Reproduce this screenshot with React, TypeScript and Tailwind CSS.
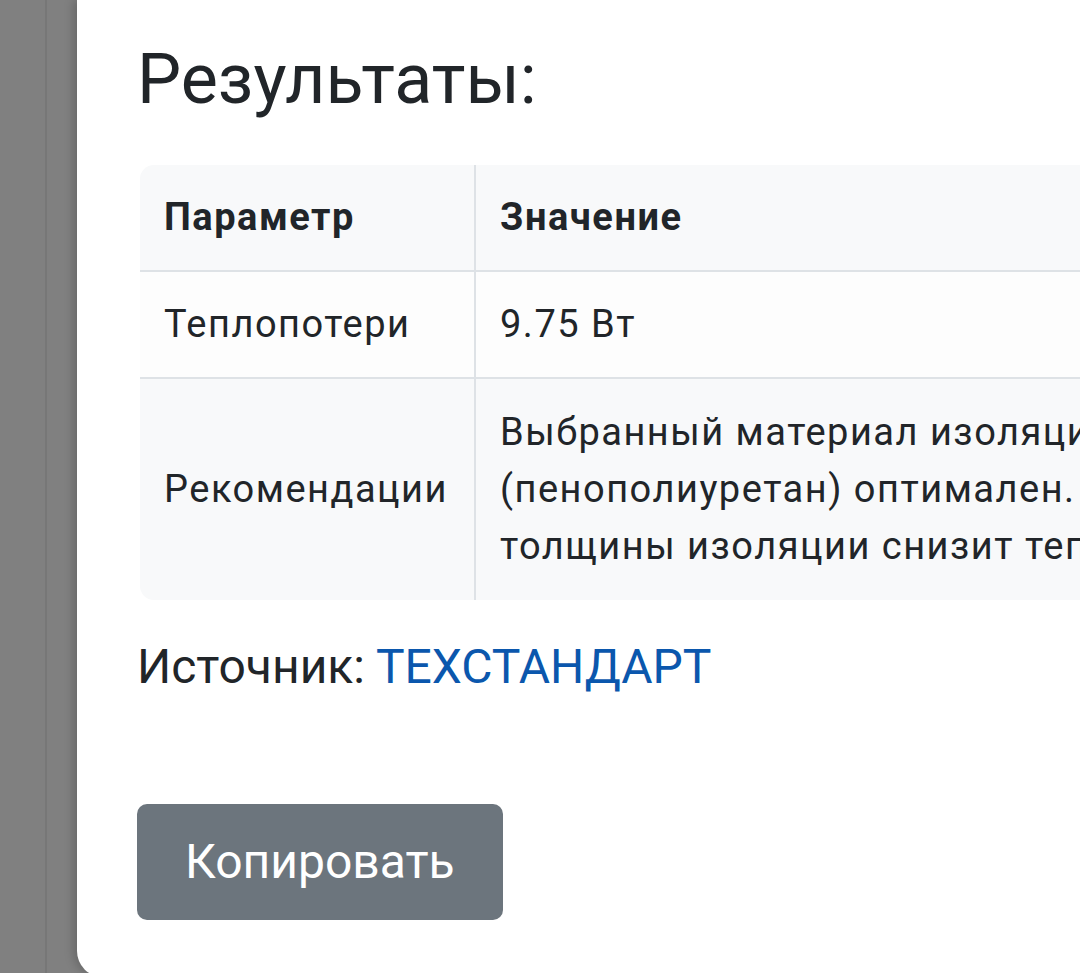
import React from "react";

// Result modal, seen zoomed in: dimmed page on the left, white dialog that
// runs off the right edge of the viewport.

const rows = [
  { name: "Теплопотери", value: "9.75 Вт" },
  {
    name: "Рекомендации",
    value:
      "Выбранный материал изоляции (пенополиуретан) оптимален. Увеличение толщины изоляции снизит теплопотери.",
  },
];

export default function App() {
  return (
    <div
      className="flex h-[973px] w-full overflow-hidden bg-[#808080] text-[#212529]"
      style={{ fontFamily: "Roboto, 'Noto Sans', sans-serif" }}
    >
      <div className="w-[45px] shrink-0" />
      <div className="w-[2px] shrink-0 bg-[#777777]" />
      <div className="w-[30px] shrink-0" />

      <div className="w-[1300px] shrink-0 self-start rounded-bl-[26px] bg-white pb-[57px] pl-[60px] pt-[37px] shadow-[-4px_0_10px_rgba(0,0,0,0.18)]">
        <h2 className="text-[70px] leading-[84px] font-normal">Результаты:</h2>

        <div className="ml-[3px] mt-[44px] w-[1282px] overflow-hidden rounded-l-[14px]">
          <table className="w-full table-fixed border-separate border-spacing-0 text-[38px] leading-[57px] tracking-[1.5px]">
            <colgroup>
              <col className="w-[336px]" />
              <col />
            </colgroup>
            <thead>
              <tr className="bg-[#f8f9fa]">
                <th className="border-b-2 border-r-2 border-[#dee2e6] px-[24px] py-[24px] text-left font-bold">
                  Параметр
                </th>
                <th className="border-b-2 border-[#dee2e6] px-[24px] py-[24px] text-left font-bold">
                  Значение
                </th>
              </tr>
            </thead>
            <tbody>
              {rows.map((row, i) => {
                const last = i === rows.length - 1;
                return (
                  <tr
                    key={row.name}
                    className={last ? "bg-[#f8f9fa]" : "bg-[#fdfdfd]"}
                  >
                    <td
                      className={
                        last
                          ? "border-r-2 border-[#dee2e6] px-[24px] py-[25px] align-middle"
                          : "border-b-2 border-r-2 border-[#dee2e6] px-[24px] py-[24px] align-middle"
                      }
                    >
                      {row.name}
                    </td>
                    <td
                      className={
                        last
                          ? "px-[24px] py-[25px] align-middle"
                          : "border-b-2 border-[#dee2e6] px-[24px] py-[24px] align-middle"
                      }
                    >
                      <div className="w-[900px]">{row.value}</div>
                    </td>
                  </tr>
                );
              })}
            </tbody>
          </table>
        </div>

        <p className="mt-[31px] text-[48px] leading-[72px]">
          Источник:{" "}
          <a href="#" className="text-[#0b57ad]">
            ТЕХСТАНДАРТ
          </a>
        </p>

        <button className="mt-[101px] rounded-[10px] bg-[#6c757d] px-[48px] py-[22px] text-[48px] leading-[72px] text-white">
          Копировать
        </button>
      </div>
    </div>
  );
}
